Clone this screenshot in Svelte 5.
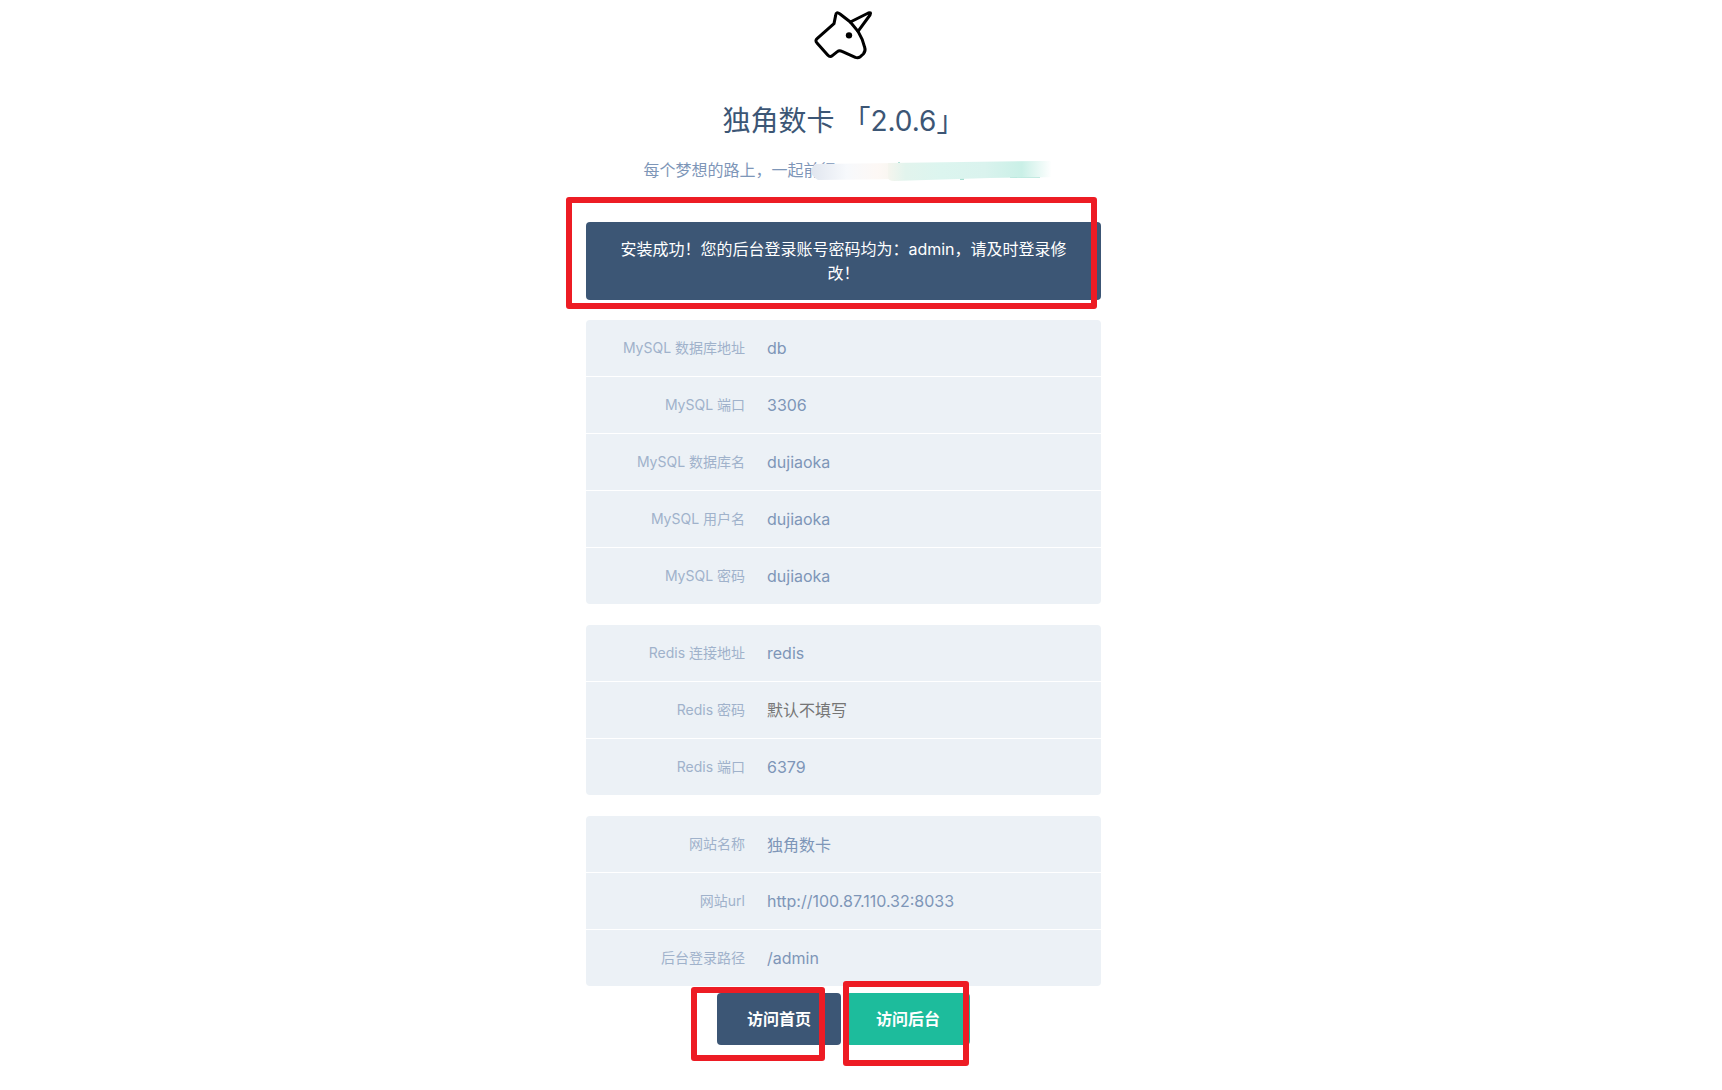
<script lang="ts">

    let groups = $state([
        [
            { id: "mysql-host", label: "MySQL 数据库地址", value: "db", placeholder: "" },
            { id: "mysql-port", label: "MySQL 端口", value: "3306", placeholder: "" },
            { id: "mysql-database", label: "MySQL 数据库名", value: "dujiaoka", placeholder: "" },
            { id: "mysql-user", label: "MySQL 用户名", value: "dujiaoka", placeholder: "" },
            { id: "mysql-password", label: "MySQL 密码", value: "dujiaoka", placeholder: "" },
        ],
        [
            { id: "redis-host", label: "Redis 连接地址", value: "redis", placeholder: "" },
            { id: "redis-password", label: "Redis 密码", value: "", placeholder: "默认不填写" },
            { id: "redis-port", label: "Redis 端口", value: "6379", placeholder: "" },
        ],
        [
            { id: "site-name", label: "网站名称", value: "独角数卡", placeholder: "" },
            { id: "site-url", label: "网站url", value: "http://100.87.110.32:8033", placeholder: "" },
            { id: "admin-path", label: "后台登录路径", value: "/admin", placeholder: "" },
        ],
    ]);

    function visit(path: string) {
        location.href = path;
    }
</script>

<div class="page">
    <main class="install">
        <svg class="logo" viewBox="-4 0 330 210" aria-hidden="true">
            <path d="M180 66 L149 42 Q137 33 136 46 L131 71 L81 115 Q73 122 80 129 L112 165 Q119 173 127 166 L141 155 Q147 150 155 154 L195 172 Q203 175 210 170 L219 162 Q227 153 223 142 Q217 117 203 94 Z" />
            <path d="M180 66 L234 39 Q244 35 239 45 L203 94" />
            <circle cx="176" cy="106" r="9.5" />
        </svg>

        <h1>独角数卡 「2.0.6」</h1>

        <p class="slogan">
            每个梦想的路上，一起前行
            <svg class="smudge" viewBox="0 0 256 24" aria-hidden="true">
                <defs>
                    <linearGradient id="smudge-warm">
                        <stop offset="0" stop-color="#e1e6ef" />
                        <stop offset="0.4" stop-color="#f7f9fc" />
                        <stop offset="0.75" stop-color="#fdf8f5" />
                        <stop offset="1" stop-color="#f5f5ee" />
                    </linearGradient>
                    <linearGradient id="smudge-green">
                        <stop offset="0" stop-color="#f5f5ee" />
                        <stop offset="0.1" stop-color="#e2f4ed" />
                        <stop offset="0.3" stop-color="#dcf5ef" />
                        <stop offset="0.55" stop-color="#daf3ee" />
                        <stop offset="0.76" stop-color="#caf0e7" />
                        <stop offset="0.93" stop-color="#ffffff" />
                    </linearGradient>
                </defs>
                <path d="M88 2h2v2h-2z M150 18h4v2h-4z M200 16h30v2h-30z" fill="#a9dfd3" />
                <path d="M5 4 L90 3 L90 19 L8 20 Q-4 13 5 4 Z" fill="url(#smudge-warm)" />
                <path d="M78 3 L230 1 L254 1 L254 17 L180 18 L84 21 Q78 21 78 17 Z" fill="url(#smudge-green)" />
            </svg>
        </p>

        <div class="success">
            安装成功！您的后台登录账号密码均为：admin，请及时登录修改！
            <span class="mark mark-success"></span>
        </div>

        <form>
            {#each groups as group}
                <div class="group">
                    {#each group as field}
                        <div class="field">
                            <label for={field.id}>{field.label}</label>
                            <input id={field.id} type="text" placeholder={field.placeholder} bind:value={field.value} />
                        </div>
                    {/each}
                </div>
            {/each}

            <div class="buttons">
                <button type="button" onclick={() => visit("/")}>
                    访问首页
                    <span class="mark mark-home"></span>
                </button>
                <button type="button" class="admin" onclick={() => visit("/admin")}>
                    访问后台
                    <span class="mark mark-admin"></span>
                </button>
            </div>
        </form>
    </main>
</div>


<style>

:global(body) {
    margin: 0;
    background: #fff;
}

.page {
    display: flex;
    justify-content: center;
    padding: 0 35px 40px 0;
    font-family: Inter, "Noto Sans CJK SC", sans-serif;
    font-size: 16px;
    line-height: 24px;
    color: #7e96b8;
}

.install {
    width: 100%;
    max-width: 515px;
    text-align: center;
}

.logo {
    display: block;
    width: 110px;
    height: 70px;
    margin: 0 auto;
    fill: none;
    stroke: #000;
    stroke-width: 9;
    stroke-linejoin: round;
    stroke-linecap: round;
}

.logo circle {
    fill: #000;
    stroke: none;
}

h1 {
    margin: 31px 0 17px;
    font-size: 28px;
    font-weight: 400;
    line-height: 40px;
    color: #3c5675;
}

.slogan {
    position: relative;
    width: 400px;
    margin: 0 auto 40px;
    text-align: left;
}

.smudge {
    position: absolute;
    top: 2px;
    left: 166px;
    width: 256px;
    height: 24px;
}

.success {
    position: relative;
    margin-bottom: 20px;
    padding: 15px 30px;
    border-radius: 4px;
    background: #3c5675;
    color: #fff;
}

.group {
    margin-bottom: 21px;
    border-radius: 4px;
    background: #ecf1f6;
    overflow: hidden;
}

.group:nth-last-child(2) {
    margin-bottom: 7px;
}

.field {
    display: flex;
    align-items: center;
    height: 56px;
}

.field + .field {
    border-top: 1px solid #fff;
}

label {
    width: 159px;
    flex-shrink: 0;
    font-size: 14px;
    text-align: right;
    color: #a0b2cb;
}

input {
    flex: 1;
    min-width: 0;
    height: 56px;
    box-sizing: border-box;
    padding: 0 22px;
    border: 0;
    outline: 0;
    background: none;
    font: inherit;
    color: inherit;
}

input::placeholder {
    color: #757575;
    opacity: 1;
}

.buttons {
    display: flex;
    justify-content: center;
    gap: 5px;
}

button {
    position: relative;
    height: 52px;
    padding: 0 30px;
    border: 0;
    border-radius: 4px;
    background: #3c5675;
    font: inherit;
    font-weight: 700;
    color: #fff;
    cursor: pointer;
}

.admin {
    background: #1dbc9c;
}

.mark {
    position: absolute;
    border: 6px solid #ed1c24;
    border-radius: 3px;
    pointer-events: none;
}

.mark-success {
    inset: -25px 4px -9px -20px;
}

.mark-home {
    inset: -6px 16px -16px -26px;
}

.mark-admin {
    inset: -12px 1px -21px -3px;
}
</style>
